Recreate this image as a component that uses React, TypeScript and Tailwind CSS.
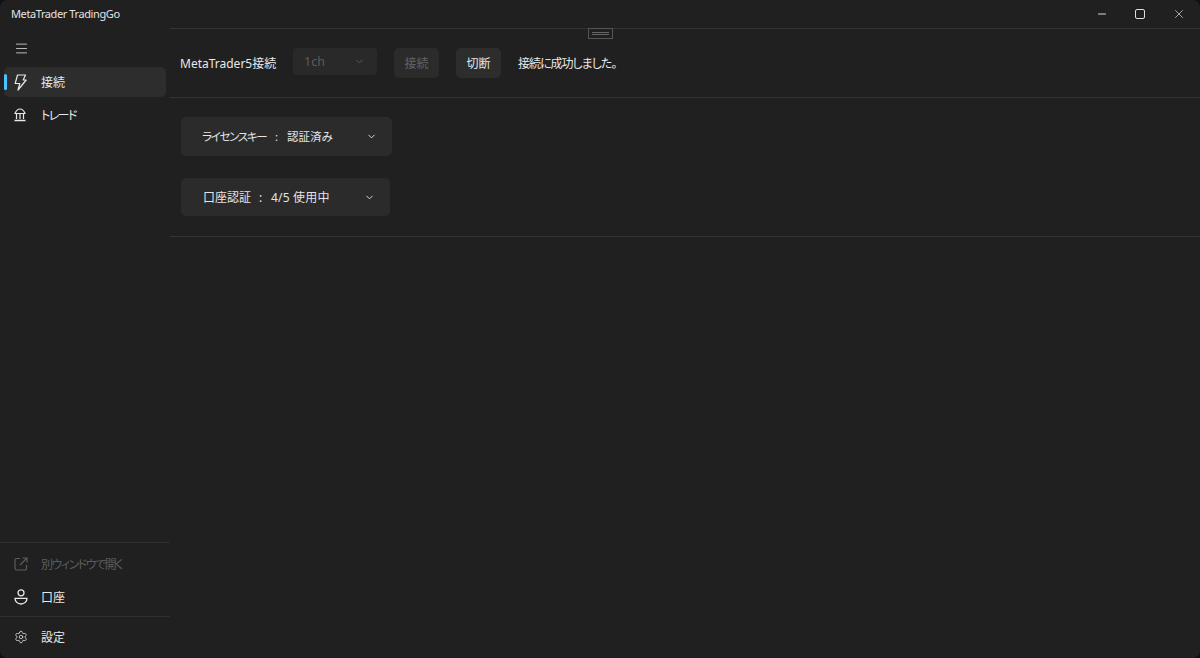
import { ChevronDown, Menu, Minus, Settings, X } from "lucide-react";

const FONT = "font-['Noto_Sans','Noto_Sans_CJK_JP',sans-serif] [font-feature-settings:'palt']";

function BoltIcon() {
  return (
    <svg width="13" height="17" viewBox="0 0 13 17" fill="none" stroke="currentColor" strokeWidth="1.2" strokeLinejoin="round">
      <path d="M3.5 1h8L9.2 6h3L4 16l1.8-6.5H1.2z" />
    </svg>
  );
}

function BankIcon() {
  return (
    <svg width="12" height="14" viewBox="0 0 12 14" fill="none" stroke="currentColor" strokeWidth="1.2">
      <path d="M1 5.5C2 3 3.8 1 6 1s4 2 5 4.5z" />
      <path d="M2.5 6v5M6 6v5M9.500 6v5" />
      <path d="M.5 12.500h11" strokeWidth="1.6" />
    </svg>
  );
}

function UserIcon() {
  return (
    <svg width="14" height="16" viewBox="0 0 14 16" fill="none" stroke="currentColor" strokeWidth="1.3">
      <circle cx="7" cy="3.8" r="3" />
      <path d="M1 9.300h12c0 3.300-2.600 5.700-6 5.700S1 12.600 1 9.300z" />
    </svg>
  );
}

function OpenIcon() {
  return (
    <svg width="14" height="14" viewBox="0 0 14 14" fill="none" stroke="currentColor" strokeWidth="1.2">
      <path d="M6 1.500H2.500a1.500 1.500 0 0 0-1.500 1.500v8.500A1.500 1.500 0 0 0 2.500 13H11a1.500 1.500 0 0 0 1.500-1.500V8" />
      <path d="M8.500 1h4.500v4.500M13 1 6 8" />
    </svg>
  );
}

function SideItem({
  icon,
  label,
  active,
  muted,
  className,
}: {
  icon: React.ReactNode;
  label: string;
  active?: boolean;
  muted?: boolean;
  className?: string;
}) {
  return (
    <div
      className={`relative mx-1 flex h-[30px] items-center rounded-[5px] pl-[10px] text-[12px] ${
        active ? "bg-[#2d2d2d]" : ""
      } ${muted ? "text-[#5c5c5c]" : "text-[#e8e8e8]"}`}
    >
      {active && <span className="absolute left-0 top-[7px] h-[16px] w-[3px] rounded-full bg-[#4cc2ff]" />}
      <span className="flex w-[27px] items-center">{icon}</span>
      <span className={`pt-[2px] ${className ?? ""}`}>{label}</span>
    </div>
  );
}

export default function App() {
  return (
    <div className="h-[658px] w-[1200px] bg-[#0f0f0f]">
      <div className={`${FONT} flex h-[658px] w-[1200px] flex-col overflow-hidden rounded-[7px] bg-[#202020] text-[#e8e8e8]`}>
        <div className="flex h-[28px] shrink-0 items-center justify-between">
          <span className="pl-[11px] text-[11px] tracking-[-0.4px] text-[#e4e4e4]">MetaTrader TradingGo</span>
          <div className="flex items-center gap-[27px] pr-[14px] text-[#dcdcdc]">
            <Minus size={12} />
            <span className="h-[10px] w-[10px] rounded-[2px] border border-[#dcdcdc]" />
            <X size={14} strokeWidth={1.2} />
          </div>
        </div>

        <div className="flex min-h-0 flex-1">
          <aside className="flex w-[170px] shrink-0 flex-col">
            <div className="flex h-[39px] items-center pl-[14px] pt-[2px] text-[#dcdcdc]">
              <Menu size={15} strokeWidth={1.3} />
            </div>
            <SideItem active icon={<BoltIcon />} label="接続" />
            <div className="mt-[3px]">
              <SideItem icon={<BankIcon />} label="トレード" className="tracking-[-1.6px]" />
            </div>
            <div className="mt-auto border-t border-[#2f2f2f] pb-[4px] pt-[6px]">
              <SideItem muted icon={<OpenIcon />} label="別ウィンドウで開く" className="tracking-[-1.5px]" />
              <div className="mt-[3px]">
                <SideItem icon={<UserIcon />} label="口座" />
              </div>
            </div>
            <div className="h-[42px] border-t border-[#2f2f2f] pt-[5px]">
              <SideItem icon={<Settings size={14} strokeWidth={1.3} />} label="設定" />
            </div>
          </aside>

          <main className="relative min-w-0 flex-1 border-t border-[#333333]">
            <span className="absolute left-[418px] top-[-1px] flex h-[11px] w-[25px] items-center justify-center border border-[#555555] bg-[#202020]">
              <span className="h-[3px] w-[17px] border-y border-[#666666]" />
            </span>

            <div className="flex h-[69px] items-center border-b border-[#333333] pl-[10px] text-[12px]">
              <span className="w-[113px] pt-[2px] text-[#e8e8e8]">MetaTrader5接続</span>
              <div className="-mt-[3px] flex h-[27px] w-[84px] items-center justify-between rounded-[4px] bg-[#292929] pl-[11px] pr-[12px] text-[12.5px] text-[#5c5c5c]">
                <span className="pt-[2px]">1ch</span>
                <ChevronDown size={11} />
              </div>
              <button className="ml-[17px] h-[30px] w-[45px] rounded-[5px] bg-[#2b2b2b] pt-[2px] text-[#636363]">接続</button>
              <button className="ml-[17px] h-[30px] w-[45px] rounded-[5px] bg-[#2d2d2d] pt-[2px] text-[#e8e8e8]">切断</button>
              <span className="ml-[17px] pt-[2px] tracking-[-1px] text-[#e8e8e8]">接続に成功しました。</span>
            </div>

            <div className="flex h-[139px] flex-col items-start gap-[22px] border-b border-[#333333] pl-[11px] pt-[19px]">
              <div className="flex h-[39px] w-[211px] items-center justify-between rounded-[5px] bg-[#2b2b2b] pl-[21px] pr-[15px] text-[11.5px] text-[#e4e4e4]">
                <span className="flex items-center">
                  <span className="w-[64px] whitespace-nowrap tracking-[-1.3px]">ライセンスキー</span>
                  <span className="w-[21px] text-center">:</span>
                  <span className="whitespace-nowrap">認証済み</span>
                </span>
                <ChevronDown size={11} className="text-[#e0e0e0]" />
              </div>
              <div className="flex h-[38px] w-[209px] items-center justify-between rounded-[5px] bg-[#2b2b2b] pl-[22px] pr-[15px] pt-[1px] text-[12px] text-[#e4e4e4]">
                <span className="flex items-center pt-[1px]">
                  <span className="w-[47px] whitespace-nowrap">口座認証</span>
                  <span className="w-[21px] text-center">:</span>
                  <span className="whitespace-pre tracking-[0.2px]">4/5 使用中</span>
                </span>
                <ChevronDown size={11} className="text-[#e0e0e0]" />
              </div>
            </div>
          </main>
        </div>
      </div>
    </div>
  );
}
